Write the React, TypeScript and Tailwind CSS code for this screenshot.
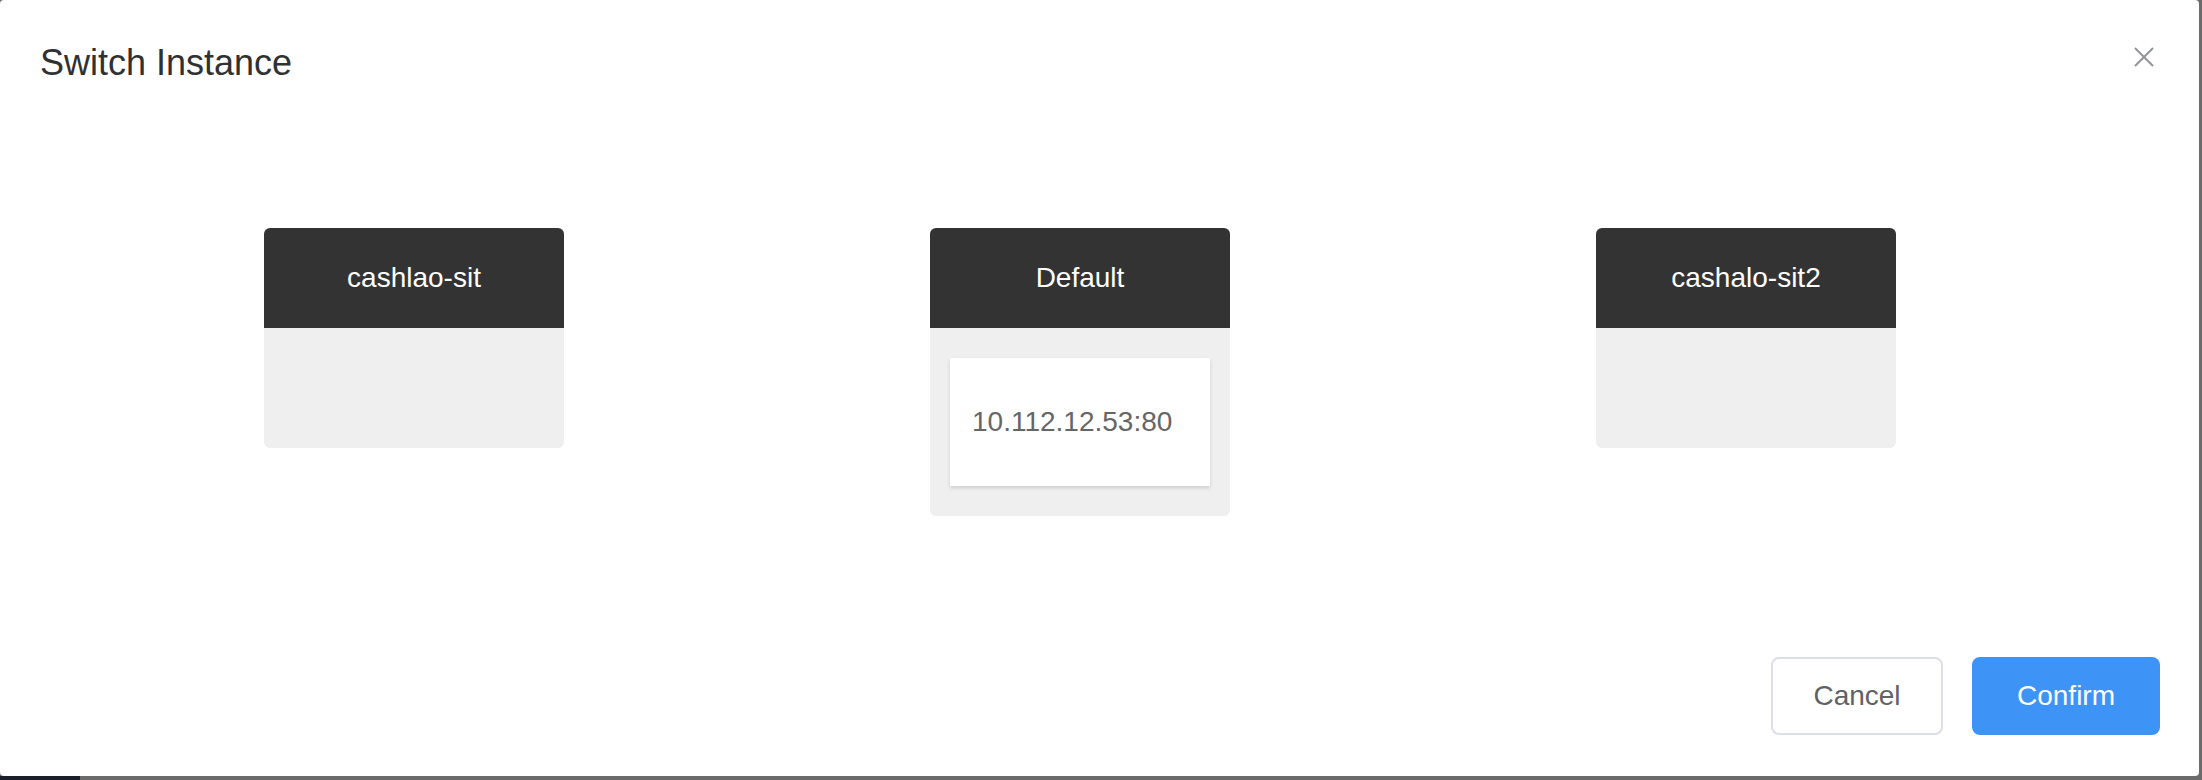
import { useState } from "react";

interface Instance {
  name: string;
  hosts: string[];
}

const instances: Instance[] = [
  { name: "cashlao-sit", hosts: [] },
  { name: "Default", hosts: ["10.112.12.53:80"] },
  { name: "cashalo-sit2", hosts: [] },
];

const InstanceCard = ({ item }: { item: Instance }) => {
  return (
    <div className="w-[300px] rounded-[6px] overflow-hidden bg-[#efefef] flex flex-col">
      <div className="h-[100px] bg-[#333333] flex items-center justify-center text-white text-[28px]">
        {item.name}
      </div>
      <div
        className={
          item.hosts.length
            ? "flex flex-col px-[20px] py-[30px] gap-4"
            : "h-[120px]"
        }
      >
        {item.hosts.map((host) => (
          <div
            key={host}
            className="h-[128px] bg-white flex items-center pl-[22px] text-[28px] text-[#666666] shadow-[0_2px_4px_rgba(0,0,0,0.14)]"
          >
            {host}
          </div>
        ))}
      </div>
    </div>
  );
};

const App = () => {
  const [open] = useState(true);

  return (
    <div
      className="w-[2202px] h-[780px] bg-[#6b6b6b] flex flex-col overflow-hidden"
      style={{ fontFamily: '"Liberation Sans", Arial, sans-serif' }}
    >
      {open && (
        <div className="w-[2199px] h-[776px] bg-white rounded-[4px] flex flex-col">
          <div className="flex items-start justify-between pl-[40px] pr-[45px] pt-[39px]">
            <div className="text-[36px] leading-[48px] text-[#303133]">
              Switch Instance
            </div>
            <svg
              width="20"
              height="20"
              viewBox="0 0 20 20"
              className="mt-[8px]"
              stroke="#909399"
              strokeWidth="2"
            >
              <line x1="1" y1="1" x2="19" y2="19" />
              <line x1="19" y1="1" x2="1" y2="19" />
            </svg>
          </div>
          <div className="flex-1 flex items-start pl-[264px] pt-[141px] gap-[366px]">
            {instances.map((item) => (
              <InstanceCard key={item.name} item={item} />
            ))}
          </div>
          <div className="flex justify-end items-center pr-[39px] pb-[41px] gap-[29px]">
            <button className="w-[172px] h-[78px] rounded-[8px] border-2 border-[#dcdfe6] bg-white text-[28px] text-[#606266]">
              Cancel
            </button>
            <button className="w-[188px] h-[78px] rounded-[8px] bg-[#3e93f6] text-[28px] text-white">
              Confirm
            </button>
          </div>
        </div>
      )}
      <div className="flex-1 flex">
        <div className="w-[80px] bg-[#1b1f27]" />
      </div>
    </div>
  );
};

export default App;
